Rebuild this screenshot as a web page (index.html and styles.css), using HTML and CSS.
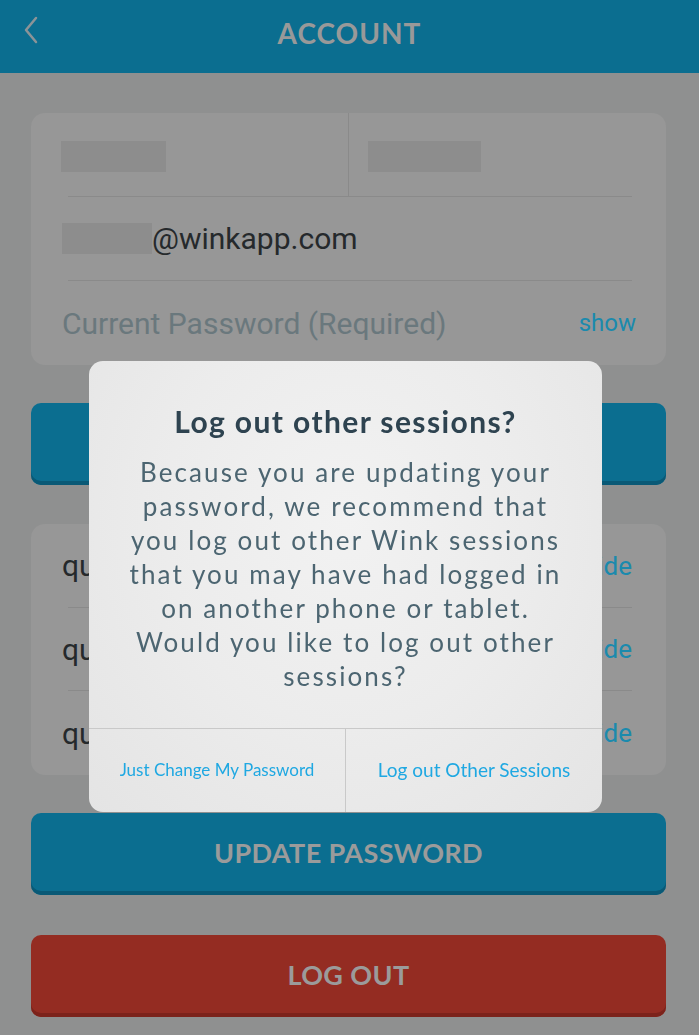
FILE: index.html
```html
<!DOCTYPE html>
<html lang="en">
<head>
<meta charset="utf-8">
<title>Account</title>
<link rel="stylesheet" href="styles.css">
</head>
<body>
<div class="app">
  <header class="topbar">
    <svg class="back" width="16" height="28" viewBox="0 0 16 28" aria-hidden="true">
      <polyline points="13,2 3,14 13,26" fill="none" stroke="currentColor" stroke-width="2.5" stroke-linecap="round" stroke-linejoin="round"/>
    </svg>
    <h1 class="title">ACCOUNT</h1>
  </header>
  <main class="content">
    <section class="card">
      <div class="row split">
        <div class="cell cell-left"><span class="redact redact-first"></span></div>
        <div class="cell cell-right"><span class="redact redact-last"></span></div>
      </div>
      <hr class="sep">
      <div class="row"><span class="redact redact-mail"></span><span class="value">@winkapp.com</span></div>
      <hr class="sep">
      <div class="row row-last"><span class="placeholder">Current Password (Required)</span><span class="link">show</span></div>
    </section>

    <button class="btn btn-blue btn-save">SAVE CHANGES</button>

    <section class="card card-questions">
      <div class="row"><span class="value">question one</span><span class="link">hide</span></div>
      <hr class="sep">
      <div class="row row-mid"><span class="value">question two</span><span class="link">hide</span></div>
      <hr class="sep">
      <div class="row row-last"><span class="value">question three</span><span class="link">hide</span></div>
    </section>

    <button class="btn btn-blue btn-update">UPDATE PASSWORD</button>
    <button class="btn btn-red">LOG OUT</button>
  </main>
</div>

<div class="backdrop"></div>

<div class="dialog" role="dialog">
  <div class="dialog-body">
    <h2 class="dialog-title">Log out other sessions?</h2>
    <p class="dialog-text">Because you are updating your<br>password, we recommend that<br>you log out other Wink sessions<br>that you may have had logged in<br>on another phone or tablet.<br>Would you like to log out other<br>sessions?</p>
  </div>
  <div class="dialog-actions">
    <button class="action action-left">Just Change My Password</button>
    <button class="action action-right">Log out Other Sessions</button>
  </div>
</div>
</body>
</html>
```

FILE: styles.css
```css
* { box-sizing: border-box; }

html, body {
  margin: 0;
  padding: 0;
}

body {
  width: 699px;
  height: 1035px;
  overflow: hidden;
  background: #cdcfcf;
  font-family: "Lato", "Open Sans", sans-serif;
}

.app {
  display: flex;
  flex-direction: column;
}

.topbar {
  height: 73px;
  background: #109ecf;
  display: flex;
  align-items: center;
  justify-content: center;
  position: relative;
  color: #dcdcdc;
  padding-bottom: 8px;
}

.back {
  position: absolute;
  left: 23px;
  top: 16px;
  color: #c9d3d8;
}

.title {
  margin: 0;
  font-size: 28px;
  font-weight: 700;
  letter-spacing: 1px;
}

.content {
  display: flex;
  flex-direction: column;
  padding: 40px 33px 0 31px;
}

.card {
  background: #d8d8d8;
  border-radius: 14px;
  display: flex;
  flex-direction: column;
}

.row {
  height: 83px;
  display: flex;
  align-items: center;
  justify-content: space-between;
  padding: 0 30px 0 31px;
  font-family: "Roboto", "Noto Sans", sans-serif;
}

.row-last { height: 84px; }

.card-questions .row { padding-right: 34px; }
.card-questions .row-mid { height: 82px; }
.card-questions .link { font-size: 26px; }

.split {
  padding: 0;
  justify-content: flex-start;
  align-items: stretch;
}

.cell {
  display: flex;
  align-items: center;
  padding-top: 3px;
}

.cell-left {
  width: 318px;
  padding-left: 30px;
  border-right: 1px solid #c6c6c6;
}

.cell-right { padding-left: 19px; }

.sep {
  margin: 0 34px 0 37px;
  border: 0;
  height: 1px;
  background: #c6c6c6;
}

.redact {
  display: block;
  height: 31px;
  background: #cbcbcb;
}

.redact-first { width: 105px; }
.redact-last { width: 113px; }
.redact-mail { width: 90px; }

.row .redact-mail + .value { margin-right: auto; }

.value {
  font-size: 30px;
  color: #363c3f;
}

.placeholder {
  font-size: 30px;
  color: #98adb4;
}

.link {
  font-size: 24px;
  color: #27c6f8;
}

.btn {
  height: 82px;
  border: 0;
  border-radius: 10px;
  padding: 0 0 4px;
  font-family: "Lato", "Open Sans", sans-serif;
  font-size: 27px;
  font-weight: 700;
  letter-spacing: 0.4px;
  color: #dedede;
}

.btn-blue {
  background: #109ecf;
  box-shadow: inset 0 -4px 0 #0d80a9;
}

.btn-save { margin: 38px 0 39px; }
.btn-update { margin-top: 38px; }

.btn-red {
  background: #d53f31;
  box-shadow: inset 0 -4px 0 #b23327;
  margin-top: 40px;
}

.backdrop {
  position: fixed;
  inset: 0;
  background: rgba(0, 0, 0, 0.3);
}

.dialog {
  position: absolute;
  left: 89px;
  top: 361px;
  width: 513px;
  height: 451px;
  border-radius: 14px;
  background: radial-gradient(ellipse at 50% 35%, #f2f2f2 0%, #ececec 50%, #e4e4e4 100%);
  display: flex;
  flex-direction: column;
  overflow: hidden;
}

.dialog-body {
  flex: 1;
  padding: 43px 10px 0;
  text-align: center;
}

.dialog-title {
  margin: 0;
  font-size: 30px;
  line-height: 34px;
  font-weight: 700;
  letter-spacing: 1.4px;
  color: #2e4350;
}

.dialog-text {
  margin: 17px 0 0;
  font-size: 26px;
  line-height: 34px;
  letter-spacing: 2.1px;
  color: #4c6571;
}

.dialog-actions {
  height: 84px;
  display: flex;
  border-top: 1px solid #c9c9c9;
}

.action {
  flex: 1;
  border: 0;
  background: transparent;
  font-family: "Lato", "Open Sans", sans-serif;
  font-size: 17px;
  color: #1fa8e2;
  padding: 0 0 2px;
}

.action-left {
  flex: 0 0 257px;
  border-right: 1px solid #c9c9c9;
}

.action-right { font-size: 19px; }
```
